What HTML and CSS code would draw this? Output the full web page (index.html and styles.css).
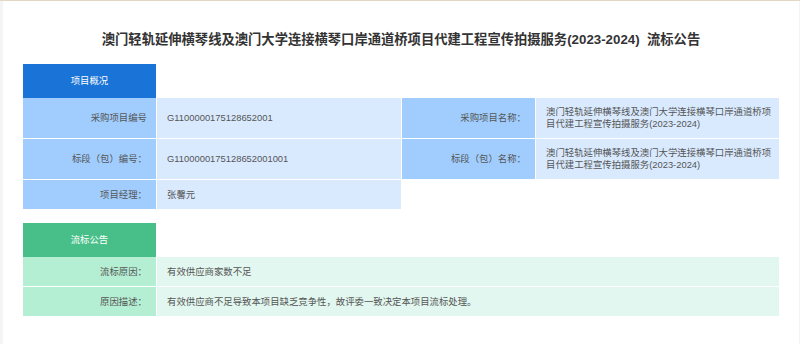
FILE: index.html
```html
<!DOCTYPE html>
<html lang="zh-CN">
<head>
<meta charset="utf-8">
<title>流标公告</title>
<link rel="stylesheet" href="styles.css">
</head>
<body>
<div class="page">
  <h1 class="title">澳门轻轨延伸横琴线及澳门大学连接横琴口岸通道桥项目代建工程宣传拍摄服务(2023-2024)&nbsp;&nbsp;流标公告</h1>

  <section class="section blue">
    <div class="sec-head">项目概况</div>
    <div class="grid grid-4">
      <div class="lbl">采购项目编号</div>
      <div class="val">G1100000175128652001</div>
      <div class="lbl">采购项目名称：</div>
      <div class="val">澳门轻轨延伸横琴线及澳门大学连接横琴口岸通道桥项目代建工程宣传拍摄服务(2023-2024)</div>

      <div class="lbl">标段（包）编号：</div>
      <div class="val">G1100000175128652001001</div>
      <div class="lbl">标段（包）名称：</div>
      <div class="val">澳门轻轨延伸横琴线及澳门大学连接横琴口岸通道桥项目代建工程宣传拍摄服务(2023-2024)</div>

      <div class="lbl">项目经理：</div>
      <div class="val">张馨元</div>
    </div>
  </section>

  <section class="section green">
    <div class="sec-head">流标公告</div>
    <div class="grid grid-2">
      <div class="lbl">流标原因：</div>
      <div class="val">有效供应商家数不足</div>
      <div class="lbl">原因描述：</div>
      <div class="val">有效供应商不足导致本项目缺乏竞争性，故评委一致决定本项目流标处理。</div>
    </div>
  </section>
</div>
</body>
</html>
```

FILE: styles.css
```css
html, body {
  margin: 0;
  padding: 0;
}
body {
  background: #f4f4f4;
  border-top: 1px solid #e2d7c4;
  font-family: "Liberation Sans", "Noto Sans CJK SC", sans-serif;
  height: 343px;
  overflow: hidden;
}
.page {
  margin-left: 3px;
  width: 796px;
  height: 343px;
  background: #ffffff;
  box-sizing: border-box;
  padding: 30px 20px 0 20px;
}
.title {
  margin: 0;
  text-align: center;
  font-size: 13.3px;
  line-height: 18px;
  font-weight: bold;
  color: #333333;
}
.section {
  width: 756px;
}
.blue {
  margin-top: 15px;
}
.green {
  margin-top: 14px;
}
.sec-head {
  width: 133px;
  height: 34px;
  line-height: 34px;
  text-align: center;
  color: #ffffff;
  font-size: 9.4px;
}
.blue .sec-head { background: #1a73d6; }
.green .sec-head { background: #48bf88; }

.grid {
  display: grid;
  gap: 1px;
  font-size: 9.4px;
  line-height: 12px;
  color: #555555;
}
.grid-4 { grid-template-columns: 133px 244px 133px 243px; }
.grid-2 { grid-template-columns: 133px 622px; }

.lbl, .val {
  box-sizing: border-box;
  min-height: 29px;
  padding: 8px 6px 8px 10px;
  display: flex;
  align-items: center;
}
.lbl {
  justify-content: flex-end;
  text-align: right;
  padding-right: 9px;
}
.blue .lbl { background: #a0cdfd; }
.blue .val { background: #d9eaff; }
.green .lbl { background: #b4eed3; }
.green .val { background: #e2f7ef; }
```
